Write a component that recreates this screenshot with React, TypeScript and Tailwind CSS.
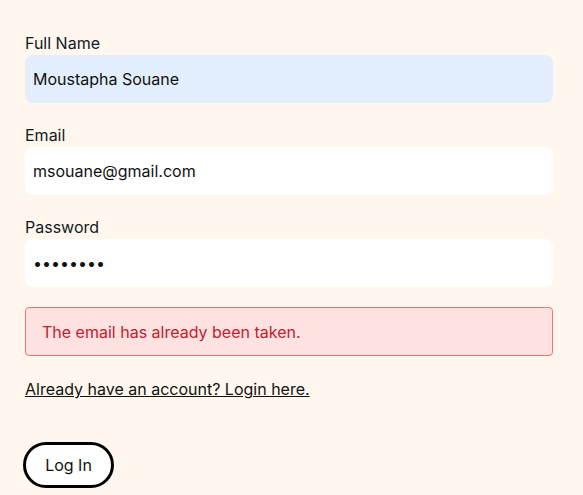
export default function App() {
  return (
    <div className="min-h-[495px] w-full bg-[#fff7ee] px-[25px] pt-[31px] text-[#111827]" style={{ fontFamily: 'Inter, "Noto Sans", sans-serif' }}>
      <form className="flex w-[528px] flex-col" onSubmit={(e) => e.preventDefault()}>
        <div className="flex flex-col">
          <label className="h-6 text-base leading-6">Full Name</label>
          <input
            className="h-12 w-full rounded-lg bg-[#e3eefc] px-2 text-base text-[#111] outline-none"
            defaultValue="Moustapha Souane"
          />
        </div>
        <div className="mt-5 flex flex-col">
          <label className="h-6 text-base leading-6">Email</label>
          <input className="h-12 w-full rounded-lg bg-white px-2 text-base text-[#111] outline-none" defaultValue="msouane@gmail.com" />
        </div>
        <div className="mt-5 flex flex-col">
          <label className="h-6 text-base leading-6">Password</label>
          <input type="password" className="h-12 w-full rounded-lg bg-white px-2 text-base text-[#111] outline-none" defaultValue="password" />
        </div>
        <div className="mt-5 flex h-[49px] items-center rounded border border-[#f87171] bg-[#fee2e2] px-4 text-base text-[#c2202a]">
          The email has already been taken.
        </div>
        <a href="#" className="mt-[21px] h-6 self-start text-base leading-6 text-[#111] underline">
          Already have an account? Login here.
        </a>
        <button type="submit" className="-ml-[2px] mt-[41px] h-[46px] w-[91px] self-start rounded-full border-[3px] border-black bg-white text-base text-[#111]">
          Log In
        </button>
      </form>
    </div>
  );
}
